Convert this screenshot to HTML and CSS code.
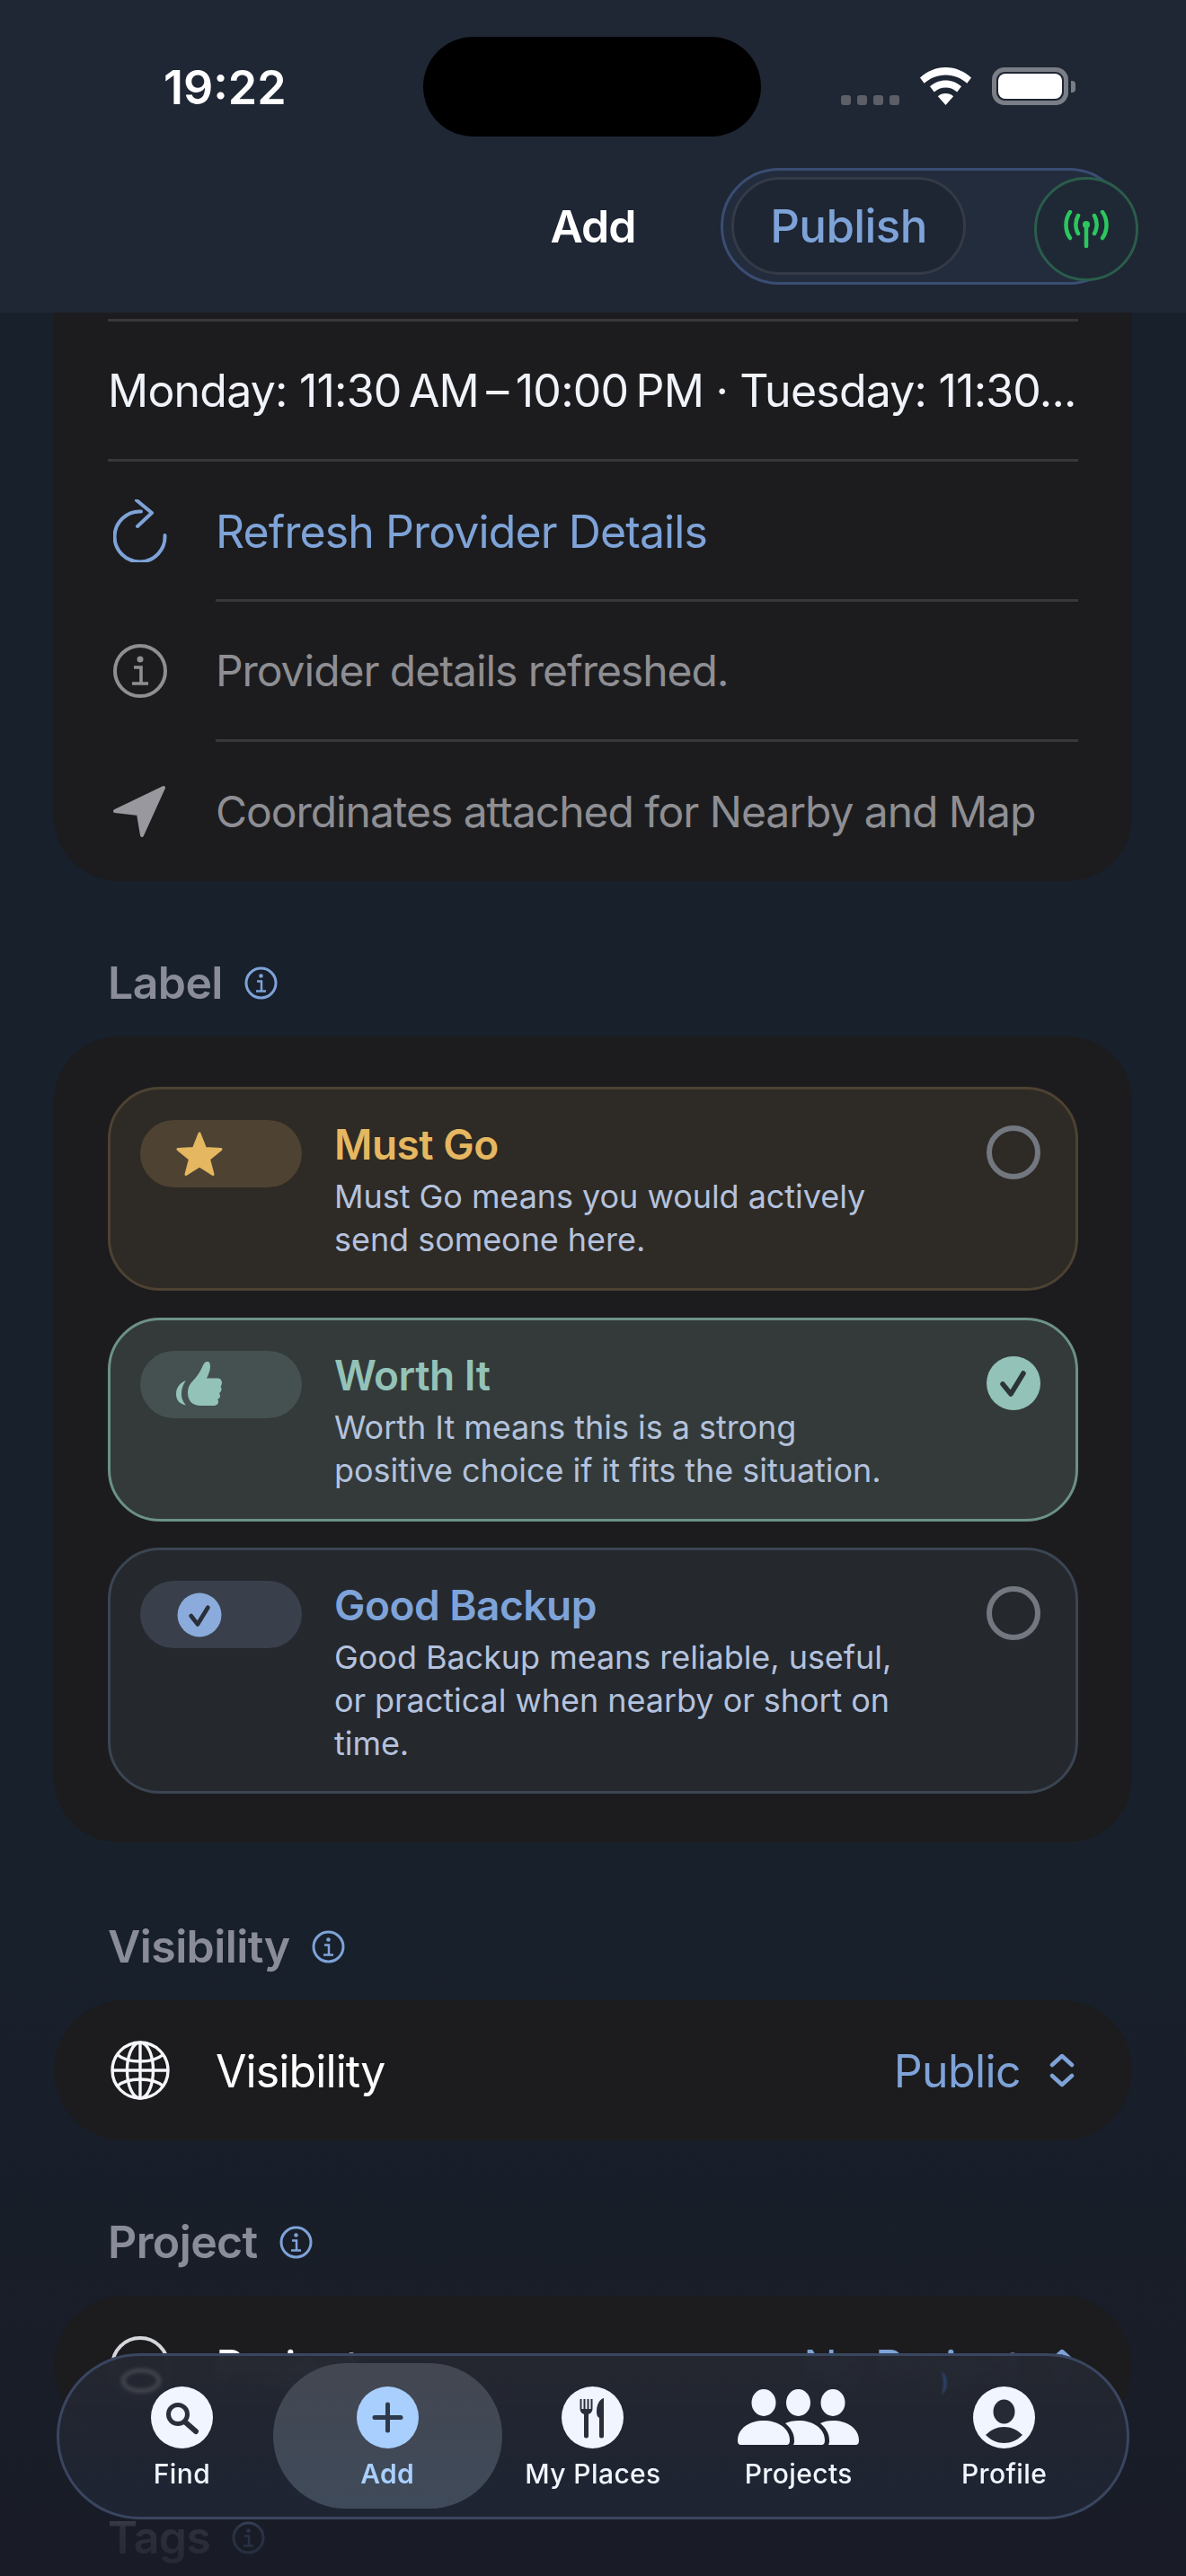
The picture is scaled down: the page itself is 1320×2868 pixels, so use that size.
FILE: index.html
```html
<!DOCTYPE html>
<html lang="en">
<head>
<meta charset="utf-8">
<title>Add</title>
<link rel="stylesheet" href="styles.css">
</head>
<body>
<div class="screen">
  <header class="header">
    <div class="status">
      <div class="time">19:22</div>
      <div class="island"></div>
      <div class="status-right">
        <div class="signal"><i></i><i></i><i></i><i></i></div>
        <svg class="wifi" viewBox="0 0 57 42"><path d="M28.5 0C17.4 0 7.5 4.5 0 11.5l4.7 6.2C11 12 19.3 8.4 28.5 8.4S46 12 52.300 17.700L57 11.500C49.500 4.500 39.600 0 28.500 0Z"/><path d="M28.500 14.500C21.800 14.500 15.700 17 11 21.300l4.800 6.200c3.300-3.100 7.800-5 12.700-5s9.400 1.900 12.700 5L46 21.300C41.300 17 35.200 14.500 28.500 14.500Z"/><path d="M28.500 29c-3.300 0-6.300 1.200-8.600 3.200L28.500 42l8.600-9.800C34.800 30.200 31.800 29 28.500 29Z"/></svg>
        <div class="battery"><div class="battery-fill"></div></div>
        <div class="battery-nub"></div>
      </div>
    </div>
    <div class="nav">
      <div class="nav-title">Add</div>
      <div class="publish-group">
        <div class="publish">Publish</div>
        <div class="live">
          <svg viewBox="0 0 50 42" class="live-icon" fill="none" stroke="currentColor" stroke-width="4.500" stroke-linecap="round"><path d="M25 18V40"/><circle cx="25" cy="16" r="4" fill="currentColor" stroke="none"/><path d="M16 6C12.500 12 12.500 20 16 26"/><path d="M34 6c3.500 6 3.500 14 0 20"/><path d="M7 2C1 10 1 23 7 31"/><path d="M43 2c6 8 6 21 0 29"/></svg>
        </div>
      </div>
    </div>
  </header>

  <main class="content">
    <section class="card card-details">
      <div class="row row-hours"><span class="hours">Monday: 11:30&#8201;AM&#8201;–&#8201;10:00&#8201;PM · Tuesday: 11:30...</span></div>
      <div class="row row-full">
        <svg class="row-icon" viewBox="0 0 60 70" fill="none" stroke="#7ea3d8" stroke-width="4" stroke-linecap="round" stroke-linejoin="round"><path d="M31 13.500A28 28 0 1 0 57.500 40"/><path d="M26 1L43 15 27 30"/></svg>
        <span class="row-text link">Refresh Provider Details</span>
      </div>
      <div class="row row-inset">
        <svg class="row-icon" viewBox="0 0 60 60" fill="none" stroke="#8e8e93" stroke-width="4"><circle cx="30" cy="30" r="28"/><circle cx="30" cy="17" r="3.500" fill="#8e8e93" stroke="none"/><path d="M23 26h8v17M21 44h18" stroke-width="3.600"/></svg>
        <span class="row-text muted">Provider details refreshed.</span>
      </div>
      <div class="row row-inset">
        <svg class="row-icon" viewBox="0 0 60 58" fill="#98989e" stroke="#98989e" stroke-width="4" stroke-linejoin="round"><path d="M2 28L56 2 32 55 28 31Z"/></svg>
        <span class="row-text muted">Coordinates attached for Nearby and Map</span>
      </div>
    </section>

    <h2 class="head">Label <svg class="info" viewBox="0 0 37 37" fill="none" stroke="#7ea3d8" stroke-width="3"><circle cx="18.500" cy="18.500" r="16.500"/><circle cx="18.500" cy="10.500" r="2.300" fill="#7ea3d8" stroke="none"/><path d="M14 16.500h5v11M13 27.500h11" stroke-width="2.500"/></svg></h2>

    <section class="card card-labels">
      <div class="option must">
        <div class="pill">
          <svg class="pill-icon" viewBox="0 0 52 50" fill="#e5b760" stroke="#e5b760" stroke-width="3" stroke-linejoin="round"><path d="M26 2l6.500 16.500 17.500 1-13.500 11 4.500 17L26 38 11 47.500l4.500-17L2 19.500l17.500-1Z"/></svg>
        </div>
        <div class="option-body">
          <div class="option-title">Must Go</div>
          <div class="option-desc">Must Go means you would actively<br>send someone here.</div>
        </div>
        <div class="radio"></div>
      </div>
      <div class="option worth">
        <div class="pill">
          <svg class="pill-icon" viewBox="0 0 52 50" fill="#93c2b8"><path d="M11 21C3 24 0 30 0 36s3 11 11 12.500C7 44 6 40 6 36s1-10 5-15Z"/><path d="M35 0c-3 0-4 2-5 4-2 5-6 12-11 17-3 3-6 7-6 14 0 9 6 14 14 14h14c4 0 6-2 6-4 0-1 0-2-1-3 2-1 3-2 3-4 0-1-.5-2-1-3 1.500-1 2.500-2.500 2.500-4.500 0-1-.5-2-1-3 1-1 1.500-2.500 1.500-4 0-3-2-5-5-5H34c2-4 4-9 4-13 0-3-1-6-3-6Z"/></svg>
        </div>
        <div class="option-body">
          <div class="option-title">Worth It</div>
          <div class="option-desc">Worth It means this is a strong<br>positive choice if it fits the situation.</div>
        </div>
        <div class="radio radio-on">
          <svg viewBox="0 0 60 60" fill="none" stroke="#2c3436" stroke-width="5.500" stroke-linecap="round" stroke-linejoin="round"><path d="M18 31l9 11 14-23"/></svg>
        </div>
      </div>
      <div class="option backup">
        <div class="pill">
          <svg class="pill-icon check" viewBox="0 0 48 48"><circle cx="24" cy="24" r="23.500" fill="#8aabdc"/><path d="M15 25l7 9 11-18" fill="none" stroke="#2a2f38" stroke-width="4.500" stroke-linecap="round" stroke-linejoin="round"/></svg>
        </div>
        <div class="option-body">
          <div class="option-title">Good Backup</div>
          <div class="option-desc">Good Backup means reliable, useful,<br>or practical when nearby or short on<br>time.</div>
        </div>
        <div class="radio"></div>
      </div>
    </section>

    <h2 class="head">Visibility <svg class="info" viewBox="0 0 37 37" fill="none" stroke="#7ea3d8" stroke-width="3"><circle cx="18.500" cy="18.500" r="16.500"/><circle cx="18.500" cy="10.500" r="2.300" fill="#7ea3d8" stroke="none"/><path d="M14 16.500h5v11M13 27.500h11" stroke-width="2.500"/></svg></h2>

    <section class="card card-pill">
      <svg class="row-icon globe" viewBox="0 0 66 66" fill="none" stroke="#f4f6fb" stroke-width="3.400"><circle cx="33" cy="33" r="31"/><ellipse cx="33" cy="33" rx="14.500" ry="31"/><path d="M33 2v62M2 33h62"/><path d="M7.500 15.500C14 21 23 23 33 23s19-2 25.500-7.500M7.500 50.500C14 45 23 43 33 43s19 2 25.500 7.500"/></svg>
      <span class="row-text pill-text">Visibility</span>
      <span class="row-value pill-text">Public</span>
      <svg class="chev" viewBox="0 0 28 38" fill="none" stroke="#7ea3d8" stroke-width="4.500" stroke-linecap="round" stroke-linejoin="round"><path d="M3 13L14 3l11 10M3 25l11 10 11-10"/></svg>
    </section>

    <h2 class="head">Project <svg class="info" viewBox="0 0 37 37" fill="none" stroke="#7ea3d8" stroke-width="3"><circle cx="18.500" cy="18.500" r="16.500"/><circle cx="18.500" cy="10.500" r="2.300" fill="#7ea3d8" stroke="none"/><path d="M14 16.500h5v11M13 27.500h11" stroke-width="2.500"/></svg></h2>

    <section class="card card-pill">
      <svg class="row-icon globe" viewBox="0 0 66 66" fill="none" stroke="#d5d7dc" stroke-width="4"><circle cx="33" cy="33" r="31"/></svg>
      <span class="row-text pill-text">Project</span>
      <span class="row-value pill-text">No Project</span>
      <svg class="chev" viewBox="0 0 28 38" fill="none" stroke="#7ea3d8" stroke-width="4.500" stroke-linecap="round" stroke-linejoin="round"><path d="M3 13L14 3l11 10M3 25l11 10 11-10"/></svg>
    </section>

    <h2 class="head">Tags <svg class="info" viewBox="0 0 37 37" fill="none" stroke="#7ea3d8" stroke-width="3"><circle cx="18.500" cy="18.500" r="16.500"/><circle cx="18.500" cy="10.500" r="2.300" fill="#7ea3d8" stroke="none"/><path d="M14 16.500h5v11M13 27.500h11" stroke-width="2.500"/></svg></h2>
  </main>

  <div class="fade"></div>

  <nav class="tabbar">
    <div class="ghost-ring"></div>
    <div class="ghost-bracket"></div>
    <div class="tab">
      <svg class="tab-icon" viewBox="0 0 69 69"><circle cx="34.500" cy="34.500" r="34.500" fill="#f0f5ff"/><circle cx="30" cy="31" r="10.500" fill="none" stroke="#2a2e3a" stroke-width="5"/><path d="M38 39.500L50 50" stroke="#2a2e3a" stroke-width="6" stroke-linecap="round"/></svg>
      <span class="tab-label">Find</span>
    </div>
    <div class="tab tab-active">
      <div class="tab-selection"></div>
      <svg class="tab-icon" viewBox="0 0 69 69"><circle cx="34.500" cy="34.500" r="34.500" fill="#a9cfff"/><path d="M34.500 20v29M20 34.500h29" stroke="#2e3a4c" stroke-width="5" stroke-linecap="round"/></svg>
      <span class="tab-label">Add</span>
    </div>
    <div class="tab">
      <svg class="tab-icon" viewBox="0 0 69 69"><circle cx="34.500" cy="34.500" r="34.500" fill="#f0f5ff"/><path d="M20.500 14v10c0 4 2 6 4.500 7v24a2.500 2.500 0 0 0 5 0V31c2.500-1 4.500-3 4.500-7V14h-2v11h-2V14h-2v11h-2V14h-2v11h-2V14Z" fill="#2a2e3a"/><path d="M46.500 13c-5 2-7.500 8-7.500 15 0 4 1 6 3 7v20a2.500 2.500 0 0 0 5 0V14c0-1-.2-1-.5-1Z" fill="#2a2e3a"/></svg>
      <span class="tab-label">My Places</span>
    </div>
    <div class="tab">
      <svg class="tab-icon tab-icon-wide" viewBox="0 0 135 62" fill="#f0f5ff"><ellipse cx="29" cy="15" rx="13.500" ry="15"/><ellipse cx="67.500" cy="15" rx="13.500" ry="15"/><ellipse cx="106" cy="15" rx="13.500" ry="15"/><path d="M0 57C0 43 14 35 29 35s29 8 29 22c0 3-1 5-4 5H4c-3 0-4-2-4-5Z"/><path d="M53 38c4-2 9-3 15-3 15 0 29 8 29 22 0 3-1 5-4 5H62c1-2 1-3 1-5 0-8-4-14-10-19Z"/><path d="M92 38c4-2 8-3 14-3 15 0 29 8 29 22 0 3-1 5-4 5H101c1-2 1-3 1-5 0-8-4-14-10-19Z"/></svg>
      <span class="tab-label">Projects</span>
    </div>
    <div class="tab">
      <svg class="tab-icon" viewBox="0 0 69 69"><circle cx="34.500" cy="34.500" r="34.500" fill="#f0f5ff"/><ellipse cx="34.500" cy="28" rx="12" ry="13.500" fill="#262a35"/><path d="M14 54C20 48 27 45 34.500 45S49 48 55 54C49 60 42 63 34.500 63S20 60 14 54Z" fill="#262a35"/></svg>
      <span class="tab-label">Profile</span>
    </div>
  </nav>
</div>
</body>
</html>
```
FILE: styles.css
```css
* { box-sizing: border-box; margin: 0; padding: 0; }
html, body { background: #18202b; }
body { font-family: Inter, "Liberation Sans", sans-serif; color: #fff; }

.screen {
  position: relative;
  width: 1320px;
  height: 2868px;
  overflow: hidden;
  background: linear-gradient(180deg, #18202c 0%, #18202b 75%, #191c26 100%);
}

/* Header */
.header { height: 348px; background: #1f2634; position: relative; z-index: 2; }
.status { display: grid; grid-template-columns: 471px 376px 1fr; padding-top: 41px; height: 152px; }
.time { padding-left: 182px; align-self: center; font-size: 52px; font-weight: 600; letter-spacing: 0; line-height: 1; margin-top: 3px; }
.island { background: #000; border-radius: 56px; height: 111px; }
.status-right { display: flex; align-items: flex-end; padding: 34px 0 35px 89px; height: 111px; }
.signal { display: flex; gap: 7px; margin-right: 23px; }
.signal i { display: block; width: 11px; height: 11px; background: #5c5f66; border-radius: 3px; }
.wifi { width: 57px; height: 42px; fill: #fff; margin-right: 23px; }
.battery { width: 85px; height: 42px; border: 5px solid #7a7e86; border-radius: 14px; padding: 2px; }
.battery-fill { width: 100%; height: 100%; background: #fff; border-radius: 8px; }
.battery-nub { width: 5px; height: 13px; background: #7a7e86; border-radius: 0 4px 4px 0; margin: 0 0 14px 3px; }

.nav { display: grid; grid-template-columns: 1fr auto 1fr; margin-top: 35px; height: 130px; align-items: center; }
.nav-title { grid-column: 2; font-size: 50px; font-weight: 600; letter-spacing: -1px; }
.publish-group {
  grid-column: 3; justify-self: end; margin-right: 65px;
  width: 453px; height: 130px; border-radius: 65px;
  background: #232c3d; border: 3px solid #3a4d73;
  display: flex; align-items: flex-start; padding: 7px 0 0 9px;
}
.publish {
  width: 261px; height: 109px; border-radius: 55px;
  background: #1f2633; border: 3px solid #343a46;
  display: flex; align-items: center; justify-content: center;
  font-size: 51px; font-weight: 500; letter-spacing: -.6px; color: #7ea3d8;
}
.live {
  width: 116px; height: 116px; border-radius: 50%; flex: none;
  margin-left: auto; margin-right: -15px;
  background: #1f2936; border: 3px solid #2a5d4a;
  display: flex; align-items: center; justify-content: center; color: #2cc65e;
}
.live-icon { width: 50px; height: 42px; }

/* Cards */
.content { padding: 0 60px; }
.card { background: #1c1c1e; }
.card-details { padding: 7px 60px 0; border-radius: 0 0 72px 72px; }
.row { display: flex; align-items: center; height: 156px; border-top: 3px solid #38383a; position: relative; }
.row:last-child { height: 158px; }
.row-hours { font-size: 50px; letter-spacing: -.78px; color: #f0f3fa; white-space: nowrap; }
.row-inset { border-top-color: transparent; }
.row-inset::before { content: ""; position: absolute; left: 120px; right: 0; top: -3px; height: 3px; background: #38383a; }
.row-icon { width: 60px; height: 70px; flex: none; margin: 0 54px 0 6px; }
.row-text { font-size: 50px; letter-spacing: -.9px; white-space: nowrap; }
.link { color: #7ea3d8; margin-top: 3px; }
.muted { color: #8e8e93; font-size: 48px; letter-spacing: -1.05px; }

.head {
  display: flex; align-items: center; gap: 24px;
  height: 60px; margin: 83px 0 30px 60px;
  font-size: 50px; font-weight: 600; letter-spacing: -.6px; color: #8a8d99;
}
.info { width: 37px; height: 37px; flex: none; }

.card-labels { padding: 56px 60px 54px; border-radius: 72px; display: flex; flex-direction: column; gap: 29.5px; margin-bottom: 86px; }
.card-labels + .head { margin-top: 0; }
.option { display: flex; align-items: flex-start; min-height: 227px; border: 3px solid; border-radius: 58px; padding: 34px 39px 0 33px; }
.must { background: #2e2a25; border-color: #4d4232; --tone: #e5b760; --pill: #4e4332; }
.worth { background: #333a39; border-color: #6c9188; --tone: #93c2b8; --pill: #445150; }
.backup { background: #25282d; border-color: #3b4553; --tone: #7ea3d8; --pill: #3a404b; min-height: 274px; }
.pill { width: 180px; height: 75px; border-radius: 38px; background: var(--pill); flex: none; display: flex; align-items: center; padding-left: 40px; }
.pill-icon { width: 52px; height: 50px; }
.option-body { margin-left: 36px; flex: 1; margin-top: -1px; }
.option-title { font-size: 46px; font-weight: 600; letter-spacing: -.5px; color: var(--tone); line-height: 56px; }
.option-desc { font-size: 36px; line-height: 48px; letter-spacing: -.05px; color: #b4c2dd; margin-top: 6px; }
.radio { width: 60px; height: 60px; border-radius: 50%; border: 6px solid #737780; flex: none; margin-top: 6px; }
.radio-on { background: #93c2b8; border: 0; }
.radio-on svg { display: block; width: 60px; height: 60px; }

.card-pill { display: flex; align-items: center; height: 156px; border-radius: 78px; padding: 0 64px 0 60px; }
.globe { height: 66px; width: 66px; margin: 0 51px 0 3px; }
.row-value { margin-left: auto; font-size: 50px; letter-spacing: -.6px; color: #7ea3d8; }
.pill-text { margin-top: 2px; }
.chev { width: 28px; height: 38px; margin-left: 32px; flex: none; }

.fade {
  position: absolute; left: 0; right: 0; top: 2760px; bottom: 0;
  background: linear-gradient(180deg, rgba(25,28,38,0) 0%, rgba(25,28,38,.82) 50%, rgba(25,28,38,.9) 100%);
}

/* Tab bar */
.tabbar {
  position: absolute; left: 63px; top: 2620px; width: 1194px; height: 185px;
  border: 3px solid #3a4660; border-radius: 93px;
  background: linear-gradient(180deg, rgba(36,39,48,.96) 0%, rgba(31,37,51,.98) 100%);
  backdrop-filter: blur(7px);
  display: flex; padding: 34px 22px 0;
}
.ghost-ring {
  position: absolute; left: 69px; top: 14px; width: 44px; height: 27px;
  border: 4px solid #4a4d56; border-radius: 50%; filter: blur(2px);
}
.ghost-bracket {
  position: absolute; left: 972px; top: 17px; width: 16px; height: 26px;
  border-right: 4px solid #2c4366; border-radius: 50%; filter: blur(1px);
}
.tab { position: relative; flex: 1; display: flex; flex-direction: column; align-items: center; }
.tab-selection {
  position: absolute; left: -13px; right: -13px; top: -26px; height: 162px;
  border-radius: 81px; background: linear-gradient(180deg, #434751 0%, #3f4a5a 100%);
}
.tab-icon { position: relative; display: block; width: 69px; height: 69px; }
.tab-icon-wide { width: 135px; height: 62px; margin: 3px 0 4px; }
.tab-label { position: relative; margin-top: 10px; font-size: 30px; line-height: 36px; font-weight: 500; letter-spacing: .4px; color: #f0f5ff; }
.tab-active .tab-label { color: #a9cfff; font-weight: 600; }
```
